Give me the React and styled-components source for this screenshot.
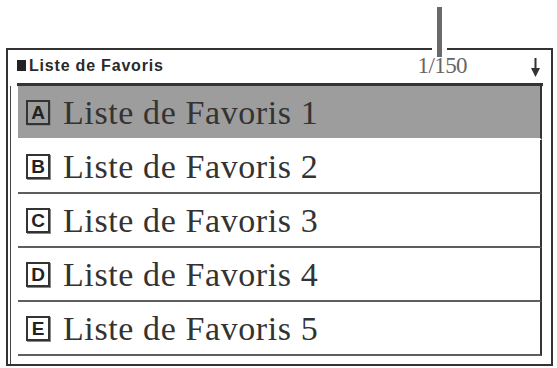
import React from "react";
import styled, { createGlobalStyle } from "styled-components";

const GlobalStyle = createGlobalStyle`
  html, body {
    margin: 0;
    padding: 0;
    background: #ffffff;
  }
  * {
    box-sizing: border-box;
  }
`;

const Page = styled.div`
  position: relative;
  width: 557px;
  height: 368px;
  padding: 48px 0 0 6px;
  background: #ffffff;
`;

/* callout pointing at the counter, drawn over the frame's top edge */
const CalloutGap = styled.div`
  position: absolute;
  left: 432px;
  top: 44px;
  width: 15px;
  height: 9px;
  background: #ffffff;
`;

const CalloutLine = styled.div`
  position: absolute;
  left: 437px;
  top: 7px;
  width: 5px;
  height: 50px;
  background: #6a6a6a;
`;

const Frame = styled.div`
  width: 547px;
  height: 318px;
  border: 2px solid #333;
  display: flex;
  flex-direction: column;
`;

const TitleBar = styled.div`
  display: flex;
  align-items: center;
  height: 36px;
  margin: 0 8px 0 9px;
  padding-bottom: 2px;
  border-bottom: 3px solid #333;
`;

const Square = styled.span`
  width: 9px;
  height: 11px;
  background: #222;
  margin-right: 3px;
`;

const Title = styled.span`
  font-family: "Liberation Sans", Arial, sans-serif;
  font-weight: 700;
  font-size: 16px;
  letter-spacing: 0.8px;
  color: #2a2a2a;
`;

const Counter = styled.span`
  margin-left: auto;
  margin-right: 64px;
  font-family: "Liberation Serif", "Times New Roman", serif;
  font-size: 23px;
  letter-spacing: -0.6px;
  color: #666;
  line-height: 1;
`;

const ArrowIcon = styled.svg`
  width: 9px;
  height: 20px;
  margin-right: 3px;
  margin-bottom: -4px;
`;

const List = styled.div`
  flex: 1;
  margin-left: 2px;
  border-left: 1px solid #444;
  padding: 0 9px 0 7px;
`;

const Row = styled.div`
  display: flex;
  align-items: center;
  gap: 13px;
  height: 54px;
  padding-left: 8px;
  border-right: 2px solid #333;
  border-bottom: 2px solid ${({ $active }) => ($active ? "#ffffff" : "#5e5e5e")};
  background: ${({ $active }) => ($active ? "#9d9d9d" : "#ffffff")};
`;

const KeyBox = styled.span`
  width: 24px;
  height: 25px;
  display: flex;
  align-items: center;
  justify-content: center;
  border: 2px solid #333;
  box-shadow: 1px 1px 0 #888;
  font-family: "Liberation Sans", Arial, sans-serif;
  font-weight: 700;
  font-size: 19px;
  line-height: 1;
  color: #222;
`;

const Label = styled.span`
  font-family: "Liberation Serif", "Times New Roman", serif;
  font-size: 34px;
  letter-spacing: 0.6px;
  color: #333;
  line-height: 1;
  padding-top: 2px;
`;

const items = ["A", "B", "C", "D", "E"];

const DownArrow = () => (
  <ArrowIcon viewBox="0 0 9 20">
    <rect x="3.5" y="0" width="2" height="13" fill="#333" />
    <polygon points="0,10 9,10 4.5,19" fill="#333" />
  </ArrowIcon>
);

const App = () => {
  return (
    <>
      <GlobalStyle />
      <Page>
        <Frame>
          <TitleBar>
            <Square />
            <Title>Liste de Favoris</Title>
            <Counter>1/150</Counter>
            <DownArrow />
          </TitleBar>
          <List>
            {items.map((key, i) => (
              <Row key={key} $active={i === 0}>
                <KeyBox>{key}</KeyBox>
                <Label>Liste de Favoris {i + 1}</Label>
              </Row>
            ))}
          </List>
        </Frame>
        <CalloutGap />
        <CalloutLine />
      </Page>
    </>
  );
};

export default App;
